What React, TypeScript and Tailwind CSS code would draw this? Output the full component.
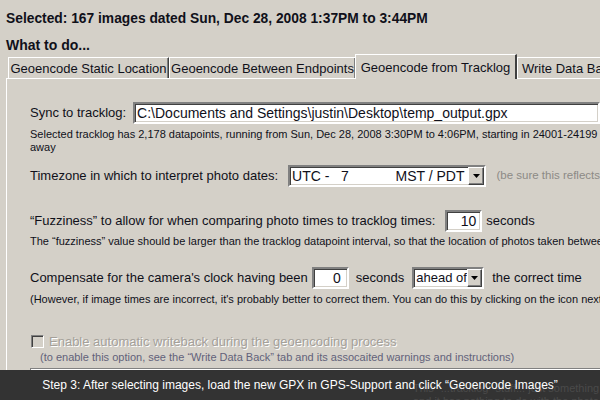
import React from "react";

const sunken =
  "border-2 border-t-[#808080] border-l-[#808080] border-b-white border-r-white shadow-[inset_1px_1px_0_#404040,inset_-1px_-1px_0_#d4d0c8]";

const DropButton = () => (
  <div className="w-[16px] h-full flex items-center justify-center bg-[#d4d0c8] border border-t-white border-l-white border-b-[#404040] border-r-[#404040] shadow-[inset_-1px_-1px_0_#808080]">
    <svg width="7" height="4" viewBox="0 0 7 4">
      <path d="M0 0h7L3.5 4z" fill="#000" />
    </svg>
  </div>
);

const tabs = [
  { name: "Geoencode Static Location", w: "w-[161px]" },
  { name: "Geoencode Between Endpoints", w: "w-[187px]" },
  { name: "Geoencode from Tracklog", w: "w-[162px]", active: true },
  { name: "Write Data Back", w: "w-[120px]" },
];

const App = () => {
  return (
    <div
      className="relative w-[600px] h-[400px] overflow-hidden bg-[#d4d0c8] text-[#10101a]"
      style={{ fontFamily: '"Liberation Sans", Arial, sans-serif' }}
    >
      <div className="pl-[6px] pt-[11px] text-[13.8px] leading-[15px] font-bold whitespace-nowrap">
        Selected: 167 images dated Sun, Dec 28, 2008 1:37PM to 3:44PM
      </div>
      <div className="pl-[6px] mt-[12px] text-[14px] leading-[15px] font-bold">What to do...</div>

      {/* tabs */}
      <div className="flex items-end pl-[8px] mt-[1px] h-[24px] whitespace-nowrap text-[13px]">
        {tabs.map((t, i) =>
          t.active ? (
            <div
              key={t.name}
              className={`${t.w} shrink-0 h-[25px] -mb-[1px] relative z-10 bg-[#d4d0c8] border-t border-l border-t-white border-l-white border-r-2 border-r-[#404040] flex items-start justify-center pt-[3px] -ml-[1px]`}
            >
              {t.name}
            </div>
          ) : (
            <div
              key={t.name}
              className={`${t.w} shrink-0 h-[21px] border-t border-l border-t-white border-l-white border-r border-r-[#404040] shadow-[inset_-1px_0_0_#808080] flex items-center pt-[1px] ${
                i === 3 ? "justify-start pl-[4px]" : "justify-center"
              }`}
            >
              {t.name}
            </div>
          )
        )}
      </div>

      {/* panel */}
      <div className="ml-[6px] border-t border-l border-white h-[400px] pl-[23px] pt-[23px] text-[13px] whitespace-nowrap">
        <div className="flex items-center h-[22px]">
          <span>Sync to tracklog:</span>
          <div className={`${sunken} ml-[7px] w-[480px] h-[22px] bg-white flex items-center pl-[2px] text-[14px]`}>
            C:\Documents and Settings\justin\Desktop\temp_output.gpx
          </div>
        </div>
        <div className="mt-[4px] text-[11px] leading-[13px]">
          Selected tracklog has 2,178 datapoints, running from Sun, Dec 28, 2008 3:30PM to 4:06PM, starting in 24001-24199 C
        </div>
        <div className="text-[11px] leading-[13px]">away</div>

        <div className="flex items-center h-[22px] mt-[11px]">
          <span>Timezone in which to interpret photo dates:</span>
          <div className={`${sunken} ml-[10px] w-[209px] h-[22px] bg-white flex items-center text-[14px]`}>
            <span className="flex-1 pl-[2px] whitespace-pre">UTC -   7            MST / PDT</span>
            <DropButton />
          </div>
          <span className="ml-[10px] text-[11.5px] text-[#8c8a86]">(be sure this reflects</span>
        </div>

        <div className="flex items-center h-[22px] mt-[23px]">
          <span>“Fuzziness” to allow for when comparing photo times to tracklog times:</span>
          <div className={`${sunken} ml-[10px] w-[37px] h-[22px] bg-white flex items-center justify-end pr-[4px] text-[14px]`}>
            10
          </div>
          <span className="ml-[4px]">seconds</span>
        </div>
        <div className="mt-[3px] text-[11px] leading-[13px]">
          The “fuzziness” value should be larger than the tracklog datapoint interval, so that the location of photos taken between
        </div>

        <div className="flex items-center h-[22px] mt-[19px]">
          <span>Compensate for the camera's clock having been</span>
          <div className={`${sunken} ml-[4px] w-[37px] h-[22px] bg-white flex items-center justify-end pr-[6px] text-[14px]`}>
            0
          </div>
          <span className="ml-[7px]">seconds</span>
          <div className={`${sunken} ml-[8px] w-[72px] h-[22px] bg-white flex items-center text-[13px]`}>
            <span className="flex-1 pl-[2px]">ahead of</span>
            <DropButton />
          </div>
          <span className="ml-[8px]">the correct time</span>
        </div>
        <div className="mt-[4px] text-[11px] leading-[13px]">
          (However, if image times are incorrect, it's probably better to correct them. You can do this by clicking on the icon next
        </div>

        <div className="flex items-center h-[15px] mt-[28px]">
          <div className="w-[13px] h-[13px] ml-[1px] border border-t-[#808080] border-l-[#808080] border-b-white border-r-white shadow-[inset_1px_1px_0_#404040,inset_-1px_-1px_0_#d4d0c8]" />
          <span className="ml-[5px] text-[#a4a09a] [text-shadow:1px_1px_0_#ffffff]">
            Enable automatic writeback during the geoencoding process
          </span>
        </div>
        <div className="mt-[2px] ml-[10px] text-[11px] leading-[13px] text-[#62627a]">
          (to enable this option, see the “Write Data Back” tab and its assocaited warnings and instructions)
        </div>

        <div className="mt-[4px] h-[60px] border-t border-l border-t-[#808080] border-l-[#808080] shadow-[inset_1px_1px_0_#ffffff]" />
      </div>

      {/* caption overlay */}
      <div className="absolute left-0 bottom-0 w-[600px] h-[30px] bg-[#333333] flex items-center justify-center">
        <div className="absolute left-[413px] top-[12px] text-[11px] leading-[13px] text-[#4a4a4a] whitespace-nowrap">
          This "...tracklog" stuff... just something
          <br />
          and it has nothing to do with the photo
        </div>
        <span className="relative text-[12px] text-white whitespace-nowrap">
          Step 3: After selecting images, load the new GPX in GPS-Support and click “Geoencode Images”
        </span>
      </div>
    </div>
  );
};

export default App;
